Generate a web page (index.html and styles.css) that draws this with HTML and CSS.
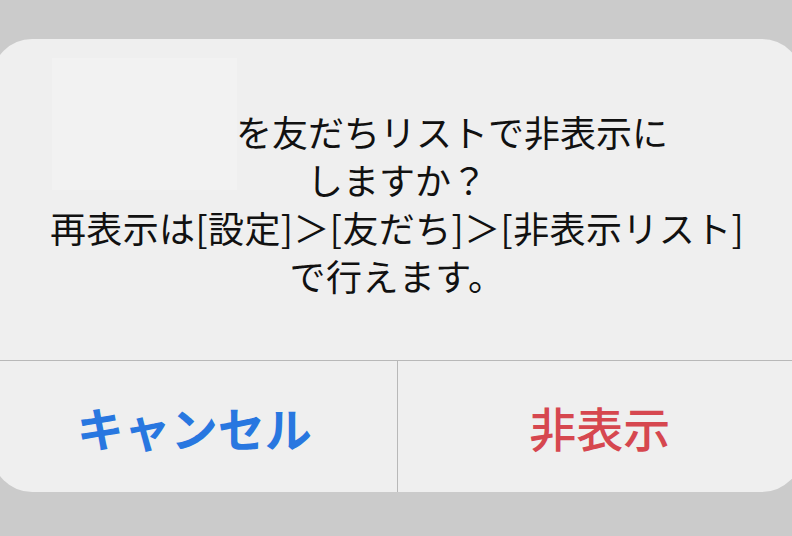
FILE: index.html
```html
<!DOCTYPE html>
<html lang="ja">
<head>
    <meta charset="utf-8">
    <link rel="stylesheet" href="styles.css">
</head>
<body>
    <div class="alert">
      <div class="thumb"></div>
      <div class="message">
        <p><span class="name"></span>を友だちリストで非表示に<br>しますか？</p>
        <p class="guide">再表示は[設定]＞[友だち]＞[非表示リスト]<br>で行えます。</p>
      </div>
      <div class="actions">
        <button class="btn cancel">キャンセル</button>
        <button class="btn hide">非表示</button>
      </div>
    </div>
</body>
</html>
```

FILE: styles.css
```css
* {
margin: 0;
padding: 0;
box-sizing: border-box;
font-family: "Noto Sans CJK JP", "Noto Sans", sans-serif;
}

body {
background-color: #cbcbcb;
width: 792px;
height: 536px;
overflow: hidden;
padding-top: 39px;
}

.alert {
position: relative;
width: 810px;
margin-left: -8px;
height: 453px;
background-color: #efefef;
border-radius: 40px;
display: flex;
flex-direction: column;
}

/* 友だちのアイコン部分 */
.thumb {
position: absolute;
top: 19px;
left: 60px;
width: 185px;
height: 132px;
background-color: #f2f2f2;
}

.message {
position: relative;
height: 322px;
padding-top: 68px;
text-align: center;
font-size: 36px;
line-height: 48px;
color: #111111;
border-bottom: 1px solid #b8b8b8;
}

.guide {
letter-spacing: 0.4px;
}

.name {
display: inline-block;
width: 110px;
}

.actions {
flex: 1;
display: flex;
}

.btn {
flex: 1;
border: none;
background-color: transparent;
font-size: 47px;
cursor: pointer;
}

.cancel {
color: #2877e0;
font-weight: bold;
}

.hide {
color: #d6474f;
font-weight: 500;
border-left: 1px solid #b8b8b8;
}
```
